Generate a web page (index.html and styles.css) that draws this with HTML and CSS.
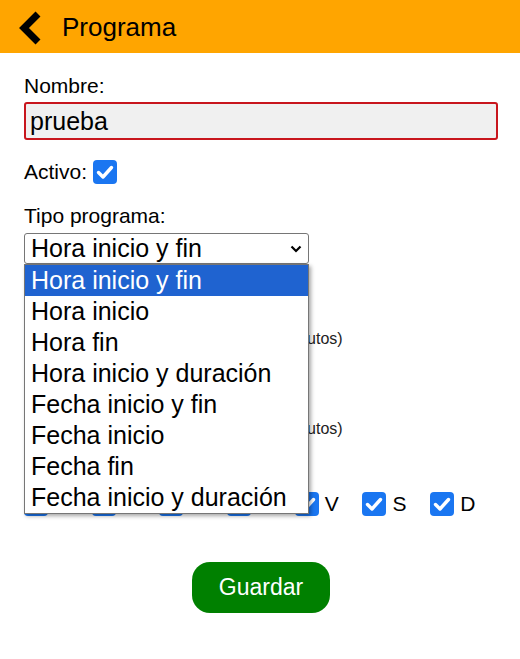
FILE: index.html
```html
<!DOCTYPE html>
<html lang="es">
<head>
<meta charset="utf-8">
<title>Programa</title>
<link rel="stylesheet" href="styles.css">
</head>
<body>
<header class="topbar">
  <svg class="back" width="26" height="36" viewBox="0 0 26 36" aria-hidden="true">
    <polyline points="21,5 7,19 21,33" fill="none" stroke="#000" stroke-width="7" stroke-linejoin="miter" stroke-linecap="butt"/>
  </svg>
  <h1 class="title">Programa</h1>
</header>
<main class="form">
  <label class="lbl lbl-first">Nombre:</label>
  <div class="text-input">prueba</div>

  <div class="activo">
    <span>Activo:</span>
    <svg class="cb" width="24" height="24" viewBox="0 0 24 24"><rect x="0" y="0" width="24" height="24" rx="4" fill="#1a76f1"/><polyline points="5.5,12.5 10,17 18.5,7.5" fill="none" stroke="#fff" stroke-width="3.4" stroke-linecap="round" stroke-linejoin="round"/></svg>
  </div>

  <label class="lbl lbl-tipo">Tipo programa:</label>
  <div class="select-wrap">
    <div class="select">
      <span>Hora inicio y fin</span>
      <svg width="12" height="8" viewBox="0 0 12 8"><polyline points="1.5,1.5 6,6 10.5,1.5" fill="none" stroke="#000" stroke-width="2.2"/></svg>
    </div>
    <ul class="dropdown">
      <li class="opt sel">Hora inicio y fin</li>
      <li class="opt">Hora inicio</li>
      <li class="opt">Hora fin</li>
      <li class="opt">Hora inicio y duración</li>
      <li class="opt">Fecha inicio y fin</li>
      <li class="opt">Fecha inicio</li>
      <li class="opt">Fecha fin</li>
      <li class="opt">Fecha inicio y duración</li>
    </ul>
  </div>

  <div class="field">
    <label class="lbl">Hora inicio:</label>
    <div class="row">
      <div class="num-input">0</div>
      <span class="hint">(minutos)</span>
    </div>
  </div>
  <div class="field">
    <label class="lbl">Hora fin:</label>
    <div class="row">
      <div class="num-input">0</div>
      <span class="hint">(minutos)</span>
    </div>
  </div>

  <label class="lbl lbl-dias">Días:</label>
  <div class="days">
    <div class="day"><svg class="cb" width="24" height="24" viewBox="0 0 24 24"><rect width="24" height="24" rx="4" fill="#1a76f1"/><polyline points="5.5,12.5 10,17 18.5,7.5" fill="none" stroke="#fff" stroke-width="3.4" stroke-linecap="round" stroke-linejoin="round"/></svg><span>L</span></div>
    <div class="day"><svg class="cb" width="24" height="24" viewBox="0 0 24 24"><rect width="24" height="24" rx="4" fill="#1a76f1"/><polyline points="5.5,12.5 10,17 18.5,7.5" fill="none" stroke="#fff" stroke-width="3.4" stroke-linecap="round" stroke-linejoin="round"/></svg><span>M</span></div>
    <div class="day"><svg class="cb" width="24" height="24" viewBox="0 0 24 24"><rect width="24" height="24" rx="4" fill="#1a76f1"/><polyline points="5.5,12.5 10,17 18.5,7.5" fill="none" stroke="#fff" stroke-width="3.4" stroke-linecap="round" stroke-linejoin="round"/></svg><span>X</span></div>
    <div class="day"><svg class="cb" width="24" height="24" viewBox="0 0 24 24"><rect width="24" height="24" rx="4" fill="#1a76f1"/><polyline points="5.5,12.5 10,17 18.5,7.5" fill="none" stroke="#fff" stroke-width="3.4" stroke-linecap="round" stroke-linejoin="round"/></svg><span>J</span></div>
    <div class="day"><svg class="cb" width="24" height="24" viewBox="0 0 24 24"><rect width="24" height="24" rx="4" fill="#1a76f1"/><polyline points="5.5,12.5 10,17 18.5,7.5" fill="none" stroke="#fff" stroke-width="3.4" stroke-linecap="round" stroke-linejoin="round"/></svg><span>V</span></div>
    <div class="day"><svg class="cb" width="24" height="24" viewBox="0 0 24 24"><rect width="24" height="24" rx="4" fill="#1a76f1"/><polyline points="5.5,12.5 10,17 18.5,7.5" fill="none" stroke="#fff" stroke-width="3.4" stroke-linecap="round" stroke-linejoin="round"/></svg><span>S</span></div>
    <div class="day"><svg class="cb" width="24" height="24" viewBox="0 0 24 24"><rect width="24" height="24" rx="4" fill="#1a76f1"/><polyline points="5.5,12.5 10,17 18.5,7.5" fill="none" stroke="#fff" stroke-width="3.4" stroke-linecap="round" stroke-linejoin="round"/></svg><span>D</span></div>
  </div>

  <div class="actions">
    <button class="btn" type="button">Guardar</button>
  </div>
</main>
</body>
</html>
```
FILE: styles.css
```css
* { box-sizing: border-box; }
html, body { margin: 0; padding: 0; background: #fff; }
body {
  font-family: "Liberation Sans", Arial, sans-serif;
  color: #000;
  width: 520px;
  height: 659px;
  overflow: hidden;
}
.topbar {
  height: 53px;
  background: #ffa500;
  display: flex;
  align-items: center;
  padding-left: 17px;
  gap: 19px;
}
.back { display: block; margin-top: 1px; }
.title {
  margin: 0;
  font-size: 26px;
  font-weight: normal;
  line-height: 1;
}
.form {
  padding: 0 24px;
  display: flex;
  flex-direction: column;
  align-items: flex-start;
}
.lbl {
  display: block;
  font-size: 21px;
  line-height: 24px;
}
.lbl-first { margin-top: 21px; }
.text-input {
  margin-top: 4px;
  width: 474px;
  height: 38px;
  border: 2px solid #c8161d;
  border-radius: 3px;
  background: #f0f0f0;
  font-size: 25px;
  line-height: 34px;
  padding-left: 4px;
}
.activo {
  margin-top: 20px;
  display: flex;
  align-items: center;
  gap: 6px;
  font-size: 21px;
  line-height: 24px;
}
.cb { display: block; flex: none; }
.lbl-tipo { margin-top: 20px; }
.select-wrap {
  position: relative;
  margin-top: 5px;
  width: 285px;
}
.select {
  height: 31px;
  border: 1px solid #767676;
  border-radius: 3px;
  background: #fff;
  display: flex;
  align-items: center;
  justify-content: space-between;
  padding: 0 6px 0 6px;
  font-size: 25px;
  line-height: 29px;
}
.select svg { display: block; }
.dropdown {
  position: absolute;
  left: 0;
  top: 31px;
  width: 285px;
  margin: 0;
  padding: 0;
  list-style: none;
  background: #fff;
  border: 1px solid #767676;
  box-shadow: 2px 2px 4px rgba(0,0,0,0.35);
  z-index: 5;
}
.opt {
  height: 31px;
  line-height: 31px;
  font-size: 25px;
  padding-left: 6px;
  white-space: nowrap;
}
.opt.sel { background: #1f63d0; color: #fff; }
.field { margin-top: 24px; }
.row {
  margin-top: 12px;
  display: flex;
  align-items: center;
  gap: 6px;
}
.num-input {
  width: 246px;
  height: 30px;
  border: 1px solid #767676;
  border-radius: 2px;
  font-size: 18px;
  line-height: 28px;
  padding-left: 4px;
}
.hint { font-size: 16px; color: #222; }
.lbl-dias { margin-top: 12px; }
.days {
  margin-top: 12px;
  display: grid;
  grid-template-columns: repeat(7, 67.7px);
}
.day {
  display: flex;
  align-items: center;
  gap: 6px;
  font-size: 21px;
  line-height: 24px;
}
.actions {
  align-self: stretch;
  display: flex;
  justify-content: center;
  margin-top: 46px;
}
.btn {
  width: 138px;
  height: 51px;
  border: none;
  border-radius: 18px;
  background: #008000;
  color: #fff;
  font-family: "Liberation Sans", Arial, sans-serif;
  font-size: 23px;
  margin-left: 2px;
  padding: 0;
}
```
